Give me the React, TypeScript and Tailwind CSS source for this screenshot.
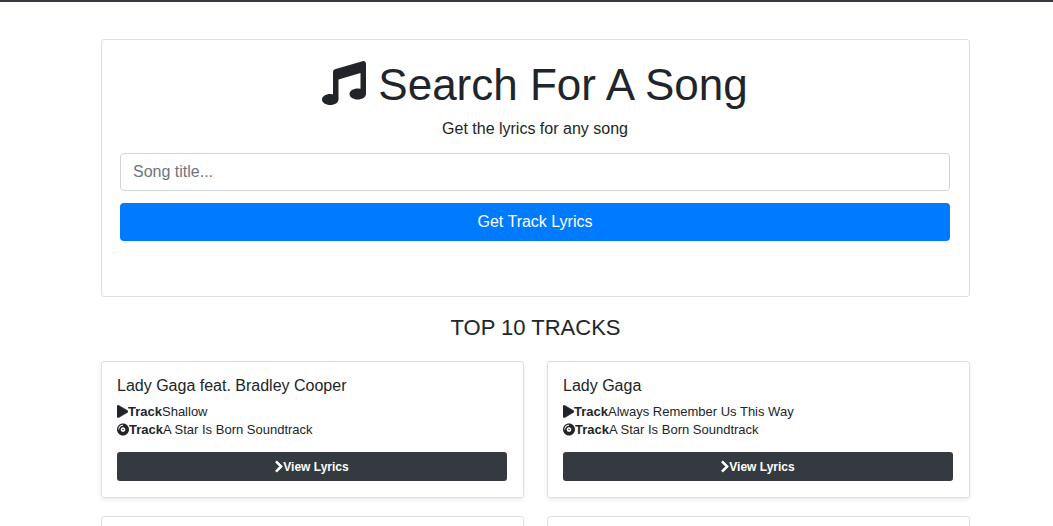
import { useState } from 'react';
import { FaChevronRight, FaCompactDisc, FaMusic, FaPlay } from 'react-icons/fa';

type Track = { id: number; artist: string; name: string; album: string };

const tracks: Track[] = [
  { id: 1, artist: 'Lady Gaga feat. Bradley Cooper', name: 'Shallow', album: 'A Star Is Born Soundtrack' },
  { id: 2, artist: 'Lady Gaga', name: 'Always Remember Us This Way', album: 'A Star Is Born Soundtrack' },
];

function SearchCard() {
  const [title, setTitle] = useState('');
  return (
    <section className="rounded-[3px] border border-[#dfdfdf] pt-[18px] pr-[19px] pb-[55px] pl-[18px]">
      <h1 className="flex items-center justify-center gap-[12px] text-[44px] leading-[54px]">
        <FaMusic aria-hidden="true" className="mb-[4px]" />
        Search For A Song
      </h1>
      <p className="mt-[4px] text-center text-[16px] leading-[26px]">Get the lyrics for any song</p>
      <form className="mt-[11px] flex flex-col gap-[12px]" onSubmit={(e) => e.preventDefault()}>
        <input
          type="text"
          aria-label="Song title"
          placeholder="Song title..."
          value={title}
          onChange={(e) => setTitle(e.target.value)}
          className="h-[38px] w-full rounded-[4px] border border-[#ced4da] px-[12px] text-[16px] placeholder:text-[#6c757d]"
        />
        <button type="submit" className="h-[38px] w-full rounded-[4px] bg-[#007bff] text-[16px] text-white">
          Get Track Lyrics
        </button>
      </form>
    </section>
  );
}

function TrackCard({ track }: { track: Track }) {
  return (
    <article className="rounded-[3px] border border-[#dfdfdf] pt-[14px] pr-[16px] pb-[16px] pl-[15px] shadow-[0_2px_4px_rgba(0,0,0,0.08)]">
      <h3 className="text-[16px] leading-[20px]">{track.artist}</h3>
      <div className="mt-[7px] text-[13px] leading-[18px]">
        <p className="flex items-center">
          <FaPlay aria-hidden="true" strokeWidth={20} className="mb-[2px] h-[13px] w-[11px]" />
          <strong className="font-bold">Track</strong>
          {track.name}
        </p>
        <p className="flex items-center">
          <FaCompactDisc aria-hidden="true" className="mb-[1px] h-[13px] w-[12px]" />
          <strong className="font-bold">Track</strong>
          {track.album}
        </p>
      </div>
      <a
        href={`#lyrics-${track.id}`}
        className="mt-[13px] flex h-[29px] items-center justify-center rounded-[3px] bg-[#343a40] text-[12px] font-bold text-white"
      >
        <FaChevronRight aria-hidden="true" strokeWidth={30} className="h-[13px] w-[8px]" />
        View Lyrics
      </a>
    </article>
  );
}

export default function App() {
  return (
    <div className="h-screen overflow-hidden bg-white font-['Liberation_Sans',Arial,sans-serif] text-[#212529]">
      <header className="h-[2px] bg-[#343a40]" />
      <main className="pt-[37px] pr-[83px] pl-[101px]">
        <SearchCard />
        <h2 className="mt-[18px] text-center text-[22px] leading-[26px]">TOP 10 TRACKS</h2>
        <div className="mt-[20px] grid grid-cols-2 gap-x-[23px] gap-y-[18px]">
          {tracks.map((track) => (
            <TrackCard key={track.id} track={track} />
          ))}
          <article className="h-[137px] rounded-[3px] border border-[#dfdfdf]" />
          <article className="h-[137px] rounded-[3px] border border-[#dfdfdf]" />
        </div>
      </main>
    </div>
  );
}
